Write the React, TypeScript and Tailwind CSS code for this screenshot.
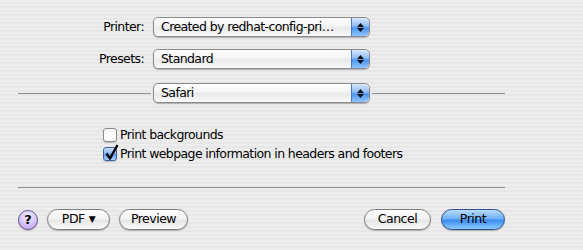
import React from 'react';

const font = { fontFamily: '"DejaVu Sans", "Liberation Sans", sans-serif' };

const Stepper: React.FC = () => (
  <div className="flex h-full w-[18px] flex-col items-center justify-center gap-[1px] rounded-r-[5px] border-l border-[#4a78c9] bg-[linear-gradient(to_bottom,#d6e8fd_0%,#8fbdf6_45%,#4d94ee_55%,#8ec6ff_100%)]">
    <svg width="7" height="4" viewBox="0 0 7 4"><path d="M3.5 0 L7 4 L0 4 Z" fill="#111" /></svg>
    <svg width="7" height="4" viewBox="0 0 7 4"><path d="M0 0 L7 0 L3.5 4 Z" fill="#111" /></svg>
  </div>
);

const Popup: React.FC<{ value: string }> = ({ value }) => (
  <div className="flex h-[20px] w-[217px] shrink-0 items-stretch overflow-hidden rounded-[5px] border border-[#8a8a8a] bg-[linear-gradient(to_bottom,#ffffff_0%,#f4f4f4_45%,#e9e9e9_55%,#fafafa_100%)] shadow-[0_1px_1px_rgba(0,0,0,0.25)]">
    <div className="flex flex-1 items-center pl-[7px] text-[12.5px] leading-none tracking-[-0.6px] text-black">{value}</div>
    <Stepper />
  </div>
);

const Checkbox: React.FC<{ checked?: boolean; label: string }> = ({ checked, label }) => (
  <div className="flex h-[18px] items-center gap-[3px]">
    <div
      className={
        checked
          ? 'relative h-[14px] w-[14px] rounded-[3px] border border-[#3e63a8] bg-[linear-gradient(to_bottom,#c9e0fb_0%,#7fb3f3_50%,#5e9ff0_55%,#a9d2ff_100%)] shadow-[0_1px_1px_rgba(0,0,0,0.2)]'
          : 'h-[14px] w-[14px] rounded-[3px] border border-[#8a8a8a] bg-[linear-gradient(to_bottom,#f2f2f2_0%,#ffffff_60%,#f6f6f6_100%)] shadow-[0_1px_1px_rgba(0,0,0,0.2)]'
      }
    >
      {checked && (
        <svg className="absolute left-[1px] top-[-4px]" width="14" height="16" viewBox="0 0 14 16">
          <path d="M1.5 9.5 L5 14.5 L12.5 1" fill="none" stroke="#000" strokeWidth="2.4" strokeLinejoin="round" />
        </svg>
      )}
    </div>
    <span className="text-[12.5px] leading-none tracking-[-0.6px] text-black">{label}</span>
  </div>
);

const Button: React.FC<{ children: React.ReactNode; w: string; primary?: boolean }> = ({ children, w, primary }) => (
  <div
    className={
      (primary
        ? 'border-[#2d4f95] bg-[linear-gradient(to_bottom,#b9dcff_0%,#6fb1f6_45%,#3d8ef0_55%,#8ccbff_100%)] '
        : 'border-[#7c7c7c] bg-[linear-gradient(to_bottom,#ffffff_0%,#f3f3f3_45%,#e6e6e6_55%,#fbfbfb_100%)] ') +
      `flex h-[21px] ${w} items-center justify-center rounded-full border text-[12.5px] leading-none tracking-[-0.5px] text-black shadow-[0_1px_1px_rgba(0,0,0,0.25)]`
    }
  >
    {children}
  </div>
);

export default function App() {
  return (
    <div
      style={font}
      className="h-[250px] w-[583px] overflow-hidden bg-[repeating-linear-gradient(to_bottom,#ededed_0px,#ededed_2px,#e7e7e7_2px,#e7e7e7_4px)] pl-[18px] pr-[78px] pt-[17px]"
    >
      <div className="flex flex-col gap-[12px]">
        <div className="flex items-center">
          <div className="w-[126px] text-right text-[12.5px] leading-none tracking-[-0.6px]">Printer:</div>
          <div className="ml-[9px]"><Popup value="Created by redhat-config-pri…" /></div>
        </div>
        <div className="flex items-center">
          <div className="w-[126px] text-right text-[12.5px] leading-none tracking-[-0.6px]">Presets:</div>
          <div className="ml-[9px]"><Popup value="Standard" /></div>
        </div>
      </div>
      <div className="mt-[14px] flex items-center">
        <div className="h-px flex-1 bg-[#8e8e8e]" />
        <div className="mx-[2px]"><Popup value="Safari" /></div>
        <div className="h-px flex-1 bg-[#8e8e8e]" />
      </div>
      <div className="mt-[23px] flex flex-col gap-[1px] pl-[85px]">
        <Checkbox label="Print backgrounds" />
        <Checkbox checked label="Print webpage information in headers and footers" />
      </div>
      <div className="mt-[24px] h-px bg-[#8e8e8e]" />
      <div className="mt-[21px] flex items-center">
        <div className="flex h-[20px] w-[20px] items-center justify-center rounded-full border border-[#6b5a93] bg-[radial-gradient(circle_at_50%_30%,#f4eeff_0%,#d4c2fb_55%,#b59af0_100%)] text-[13px] font-bold leading-none shadow-[0_1px_1px_rgba(0,0,0,0.25)]">?</div>
        <div className="ml-[9px]"><Button w="w-[63px]">PDF <span className="ml-[4px] text-[9px]">▼</span></Button></div>
        <div className="ml-[9px]"><Button w="w-[69px]">Preview</Button></div>
        <div className="flex-1" />
        <Button w="w-[67px]">Cancel</Button>
        <div className="ml-[10px]"><Button w="w-[64px]" primary>Print</Button></div>
      </div>
    </div>
  );
}
